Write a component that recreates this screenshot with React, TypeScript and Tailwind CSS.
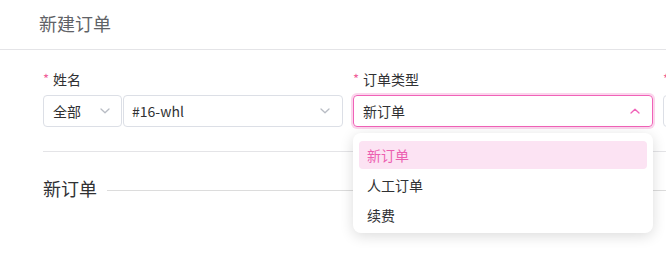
import React from "react";

function Chevron({ up = false, className = "" }: { up?: boolean; className?: string }) {
  return (
    <svg width="10" height="6" viewBox="0 0 10 6" className={className} fill="none">
      <polyline
        points={up ? "1,5 5,1.2 9,5" : "1,1 5,4.8 9,1"}
        stroke="currentColor"
        strokeWidth="1.3"
        strokeLinecap="round"
        strokeLinejoin="round"
      />
    </svg>
  );
}

function Label({ text }: { text: string }) {
  return (
    <div className="h-[20px] mb-[6px] flex items-center text-[14px] text-[#303133]">
      <span className="text-[#f0609a] mr-[4px] text-[13px]">*</span>
      {text}
    </div>
  );
}

export default function App() {
  const font = { fontFamily: '"Noto Sans CJK SC", "Liberation Sans", sans-serif' };
  return (
    <div className="w-[666px] h-[270px] bg-white overflow-hidden" style={font}>
      <div className="h-[50px] border-b border-[#e4e4e7] flex items-center px-[39px]">
        <span className="text-[18px] text-[#606266] -mt-[2px]">新建订单</span>
      </div>

      <div className="pl-[43px] pt-[19px]">
        <div className="flex gap-[10px]">
          <div className="w-[300px] shrink-0">
            <Label text="姓名" />
            <div className="flex gap-[1px]">
              <div className="w-[79px] h-[32px] border border-[#dcdfe6] rounded-[4px] flex items-center justify-between pl-[9px] pr-[11px] text-[14px] text-[#303133]">
                全部
                <Chevron className="text-[#b8bcc4]" />
              </div>
              <div className="w-[220px] h-[32px] border border-[#dcdfe6] rounded-[4px] flex items-center justify-between pl-[8px] pr-[12px] text-[14px] text-[#303133]">
                #16-whl
                <Chevron className="text-[#b8bcc4]" />
              </div>
            </div>
          </div>

          <div className="w-[300px] shrink-0">
            <Label text="订单类型" />
            <div className="relative">
              <div className="h-[32px] border border-[#f062b8] rounded-[4px] ring-2 ring-[#fbd5ec] flex items-center justify-between pl-[9px] pr-[12px] text-[14px] text-[#303133]">
                新订单
                <Chevron up className="text-[#f062b8]" />
              </div>
              <div className="absolute left-0 top-[38px] w-full bg-white rounded-[8px] shadow-[0_3px_14px_rgba(0,0,0,0.14)] px-[6px] pt-[8px] pb-[4px] flex flex-col gap-[2px] z-10">
                <div className="h-[28px] rounded-[4px] bg-[#fce3f3] text-[#ec5fb0] text-[14px] flex items-center px-[8px]">
                  新订单
                </div>
                <div className="h-[28px] text-[#303133] text-[14px] flex items-center px-[8px]">人工订单</div>
                <div className="h-[28px] text-[#303133] text-[14px] flex items-center px-[8px]">续费</div>
              </div>
            </div>
          </div>

          <div className="w-[300px] shrink-0">
            <Label text="" />
            <div className="h-[32px] border border-[#dcdfe6] rounded-[4px]" />
          </div>
        </div>

        <div className="mt-[24px] h-px bg-[#e4e4e7]" />

        <div className="mt-[24px] flex items-center">
          <span className="text-[18px] text-[#303133] leading-[24px]">新订单</span>
          <div className="flex-1 h-px bg-[#dcdcdc] ml-[10px] mt-[5px]" />
        </div>
      </div>
    </div>
  );
}
